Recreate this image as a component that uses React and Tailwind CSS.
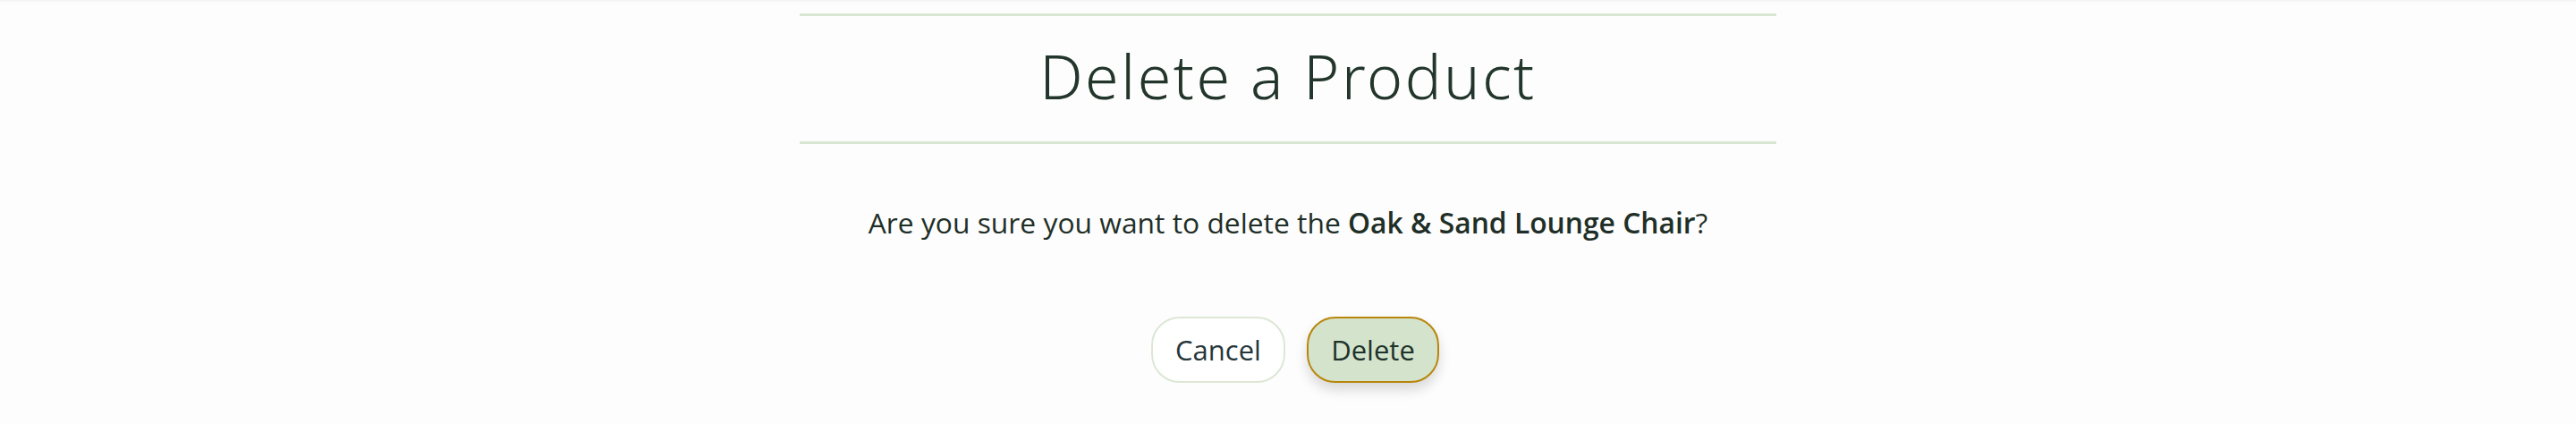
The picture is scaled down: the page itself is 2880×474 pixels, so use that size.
export default function App() {
  return (
    <div className="min-h-[474px] w-full bg-[#fdfdfd] shadow-[inset_0_3px_3px_-2px_rgba(0,0,0,0.06)]" style={{ fontFamily: '"Open Sans", sans-serif' }}>
      <div className="mx-auto w-[1092px] pt-[15px]">
        <div className="flex h-[146px] items-center justify-center border-y-[3px] border-[#d9e6d3] pb-[6px]">
          <h1 className="text-[68px] font-light tracking-[2.6px] text-[#22362c]" style={{ fontFamily: '"Noto Sans", sans-serif' }}>
            Delete a Product
          </h1>
        </div>
        <p className="mt-[66px] text-center text-[31.8px] leading-[44px] text-[#1f2f27]">
          Are you sure you want to delete the <span className="font-semibold">Oak &amp; Sand Lounge Chair</span>?
        </p>
        <div className="mt-[83px] flex justify-center gap-[24px] pl-[16px]">
          <button className="h-[74px] w-[150px] rounded-[32px] border-2 border-[#dce7d6] bg-white text-[31px] text-[#25363a]">
            Cancel
          </button>
          <button className="h-[74px] w-[148px] rounded-[32px] border-2 border-[#b8860b] bg-[#d4e3cc] text-[31px] text-[#1e332b] shadow-[0_8px_14px_rgba(0,0,0,0.15)]">
            Delete
          </button>
        </div>
      </div>
    </div>
  );
}
